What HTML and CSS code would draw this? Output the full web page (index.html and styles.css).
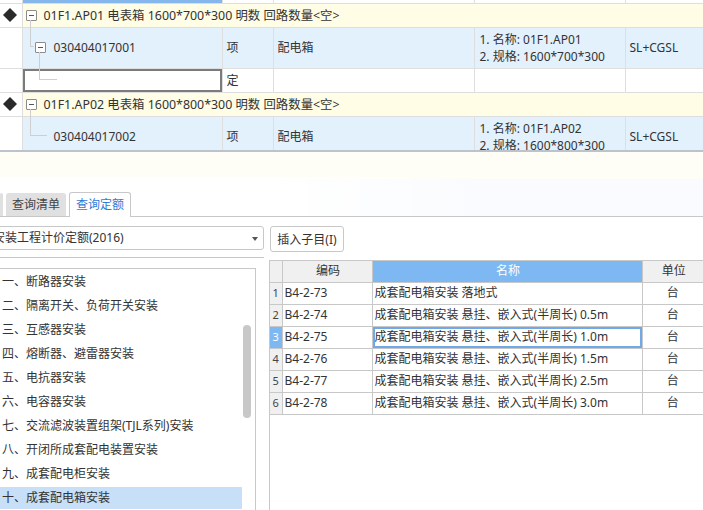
FILE: index.html
```html
<!DOCTYPE html>
<html lang="zh">
<head>
<meta charset="utf-8">
<link rel="stylesheet" href="styles.css">
</head>
<body>
<div class="top">
  <table class="grid">
    <colgroup>
      <col class="c0"><col class="c1"><col class="c2"><col class="c3"><col class="c4"><col class="c5">
    </colgroup>
    <tr class="r-cut"><td class="gut"></td><td class="cut-sel"></td><td></td><td></td><td></td><td></td></tr>
    <tr class="r-hdr">
      <td class="gut"><svg class="diamond" width="14" height="14" viewBox="0 0 14 14"><polygon points="7,0 14,7 7,14 0,7" fill="#2a2a2a"/></svg></td>
      <td class="hdr" colspan="5"><span class="minus"></span>01F1.AP01 电表箱 1600*700*300 明数 回路数量&lt;空&gt;</td>
    </tr>
    <tr class="r-item">
      <td class="gut"></td>
      <td class="code lvl2"><span class="minus"></span>030404017001</td>
      <td>项</td>
      <td>配电箱</td>
      <td class="feat">1. 名称: 01F1.AP01<br>2. 规格: 1600*700*300</td>
      <td>SL+CGSL</td>
    </tr>
    <tr class="r-sub">
      <td class="gut"></td>
      <td class="sel"></td>
      <td>定</td>
      <td></td><td></td><td></td>
    </tr>
    <tr class="r-hdr">
      <td class="gut"><svg class="diamond" width="14" height="14" viewBox="0 0 14 14"><polygon points="7,0 14,7 7,14 0,7" fill="#2a2a2a"/></svg></td>
      <td class="hdr" colspan="5"><span class="minus"></span>01F1.AP02 电表箱 1600*800*300 明数 回路数量&lt;空&gt;</td>
    </tr>
    <tr class="r-item">
      <td class="gut"></td>
      <td class="code lvl2b">030404017002</td>
      <td>项</td>
      <td>配电箱</td>
      <td class="feat">1. 名称: 01F1.AP02<br>2. 规格: 1600*800*300</td>
      <td>SL+CGSL</td>
    </tr>
  </table>
  <span class="elbow e1"></span>
  <span class="elbow e2"></span>
  <span class="elbow e3"></span>
</div>
<div class="fade">
  <div class="tabs">
    <div class="tab stub"></div>
    <div class="tab">查询清单</div>
    <div class="tab active">查询定额</div>
  </div>
</div>
<div class="toolbar">
  <div class="select"><span class="select-text">安装工程计价定额(2016)</span><span class="caret"></span></div>
  <button class="btn">插入子目(I)</button>
</div>
<div class="content">
  <div class="left">
    <ul class="list">
      <li>一、断路器安装</li>
      <li>二、隔离开关、负荷开关安装</li>
      <li>三、互感器安装</li>
      <li>四、熔断器、避雷器安装</li>
      <li>五、电抗器安装</li>
      <li>六、电容器安装</li>
      <li>七、交流滤波装置组架(TJL系列)安装</li>
      <li>八、开闭所成套配电装置安装</li>
      <li>九、成套配电柜安装</li>
      <li class="on">十、成套配电箱安装</li>
    </ul>
    <span class="thumb"></span>
  </div>
  <div class="right">
    <table class="quota">
      <colgroup><col class="q0"><col class="q1"><col class="q2"><col class="q3"></colgroup>
      <tr class="qh"><th class="rn"></th><th>编码</th><th class="hl">名称</th><th>单位</th></tr>
      <tr><td class="rn">1</td><td>B4-2-73</td><td>成套配电箱安装 落地式</td><td class="u">台</td></tr>
      <tr><td class="rn">2</td><td>B4-2-74</td><td>成套配电箱安装 悬挂、嵌入式(半周长) 0.5m</td><td class="u">台</td></tr>
      <tr><td class="rn cur">3</td><td>B4-2-75</td><td class="focus">成套配电箱安装 悬挂、嵌入式(半周长) 1.0m</td><td class="u">台</td></tr>
      <tr><td class="rn">4</td><td>B4-2-76</td><td>成套配电箱安装 悬挂、嵌入式(半周长) 1.5m</td><td class="u">台</td></tr>
      <tr><td class="rn">5</td><td>B4-2-77</td><td>成套配电箱安装 悬挂、嵌入式(半周长) 2.5m</td><td class="u">台</td></tr>
      <tr><td class="rn">6</td><td>B4-2-78</td><td>成套配电箱安装 悬挂、嵌入式(半周长) 3.0m</td><td class="u">台</td></tr>
    </table>
  </div>
</div>
</body>
</html>
```
FILE: styles.css
```css
* { box-sizing: border-box; }
html, body { margin: 0; padding: 0; background: #fff; }
body {
  font-family: "Noto Sans", "Noto Sans CJK SC", sans-serif;
  font-size: 12px;
  color: #333;
  width: 703px;
  height: 510px;
  overflow: hidden;
}

/* ---------- top tree grid ---------- */
.top {
  position: relative;
  height: 152px;
  overflow: hidden;
  border-bottom: 2px solid #bcc3cd;
}
.grid {
  border-collapse: collapse;
  table-layout: fixed;
  width: 703px;
}
.c0 { width: 22px; }
.c1 { width: 200px; }
.c2 { width: 51px; }
.c3 { width: 201px; }
.c4 { width: 151px; }
.c5 { width: 78px; }
.grid td {
  border: 1px solid #dedede;
  padding: 0 0 0 4px;
  line-height: 17px;
  white-space: nowrap;
  overflow: hidden;
  vertical-align: middle;
}
.grid tr:first-child td { border-top: none; }
.grid td:first-child { border-left: none; }
.grid td:last-child { border-right: none; }
.r-cut td { height: 3px; padding: 0; }
.grid .cut-sel { background: #86b7ec; }
.r-hdr td { height: 24px; }
.r-item td { height: 41px; background: #e3f1fd; }
.r-sub td { height: 24px; }
.grid td.gut { background: #fff; padding: 0; text-align: center; }
.diamond { display: block; margin: 0 auto 0 3px; }
.grid td.hdr {
  background: #fffde6;
  padding-left: 3px;
  font-size: 12.4px;
}
.minus {
  display: inline-block;
  position: relative;
  width: 11px;
  height: 11px;
  border: 1px solid #8c8c8c;
  border-radius: 1px;
  background: #fff;
  vertical-align: -1px;
  margin-right: 7px;
}
.minus::after {
  content: "";
  position: absolute;
  left: 2px;
  top: 4px;
  width: 5px;
  height: 1px;
  background: #555;
}
.grid td.lvl2 { padding-left: 12px; }
.grid td.lvl2 .minus { margin-right: 8px; }
.grid td.lvl2b { padding-left: 31px; }
.grid td.feat { padding-left: 5px; }
.grid td.sel { box-shadow: inset 0 0 0 2px #7b7b7b; background: #fff; }
.elbow {
  position: absolute;
  border-left: 1px solid #cfcfcf;
  border-bottom: 1px solid #cfcfcf;
}
.e1 { left: 30px; top: 20px; width: 4px; height: 27px; }
.e2 { left: 39px; top: 52px; width: 18px; height: 28px; }
.e3 { left: 30px; top: 109px; width: 17px; height: 27px; }

/* ---------- faded band + tabs ---------- */
.fade {
  height: 65px;
  display: flex;
  align-items: flex-end;
  background: linear-gradient(to bottom, #fefdf6 0, #fefdf6 27px, #f9fbfe 27px, #f9fbfe 100%);
  border-bottom: 1px solid #c8c8c8;
}
.tabs {
  display: flex;
  align-items: flex-end;
  gap: 3px;
  width: 100%;
  height: 39px;
  background: linear-gradient(to right, #fff 0, #fff 40%, rgba(255,255,255,0) 70%);
}
.tab {
  height: 23px;
  padding: 0 6px;
  line-height: 23px;
  background: #e0e0e0;
  color: #444;
  border-radius: 3px 3px 0 0;
  font-size: 12px;
}
.tab.stub { width: 3px; padding: 0; margin-left: 0; }
.tab.active {
  height: 25px;
  line-height: 24px;
  background: #fff;
  color: #2f7bd6;
  border: 1px solid #c8c8c8;
  border-bottom: none;
  margin-left: 0;
  padding: 0 6px;
  margin-bottom: -1px;
}

/* ---------- toolbar ---------- */
.toolbar {
  height: 40px;
  display: flex;
  align-items: flex-start;
  gap: 6px;
  padding-top: 9px;
}
.select {
  position: relative;
  width: 284px;
  height: 24px;
  margin-left: -20px;
  border: 1px solid #c8c8c8;
  border-radius: 3px;
  padding-left: 12px;
  line-height: 22px;
  font-size: 12px;
}
.caret {
  position: absolute;
  right: 5px;
  top: 10px;
  border-left: 3px solid transparent;
  border-right: 3px solid transparent;
  border-top: 4px solid #555;
}
.btn {
  height: 26px;
  width: 74px;
  padding: 0;
  margin: 0;
  font: inherit;
  font-size: 12px;
  color: #333;
  background: #fff;
  border: 1px solid #c8c8c8;
  border-radius: 3px;
}

/* ---------- content ---------- */
.content {
  display: flex;
  gap: 5px;
  height: 253px;
}
.left {
  position: relative;
  width: 265px;
  border-top: 1px solid #c8c8c8;
  padding-top: 10px;
}
.list {
  list-style: none;
  margin: 0 0 0 -2px;
  padding: 1px 0 0;
  width: 258px;
  height: 260px;
  border: 1px solid #c8c8c8;
}
.list li {
  height: 24px;
  line-height: 24px;
  padding-left: 3px;
  white-space: nowrap;
  width: 243px;
}
.list li.on { background: #c8dff8; height: 22px; line-height: 22px; margin-top: 1px; }
.thumb {
  position: absolute;
  left: 243px;
  top: 67px;
  width: 8px;
  height: 93px;
  border-radius: 4px;
  background: #c8c8c8;
}
.right {
  flex: 1;
  margin-top: 3px;
  border-left: 1px solid #c8c8c8;
  border-top: 1px solid #c8c8c8;
}
.quota {
  border-collapse: collapse;
  table-layout: fixed;
  width: 433px;
}
.q0 { width: 12px; }
.q1 { width: 90px; }
.q2 { width: 270px; }
.q3 { width: 61px; }
.quota th, .quota td {
  border: 1px solid #c8c8c8;
  height: 22px;
  padding: 0 0 0 2px;
  font-weight: normal;
  text-align: left;
  white-space: nowrap;
  overflow: hidden;
  line-height: 20px;
}
.quota tr:first-child th { border-top: none; height: 21px; background: #f0f0f0; text-align: center; }
.quota th:first-child, .quota td:first-child { border-left: none; }
.quota th:last-child, .quota td:last-child { border-right: none; }
.quota .rn { background: #f0f0f0; padding: 0; text-align: center; font-size: 11px; color: #444; }
.quota .rn.cur { background: #7db8f2; color: #fff; }
.quota tr.qh th.hl { background: #7db8f2; color: #fff; }
.quota td.u { text-align: center; padding: 0; }
.quota td.focus { box-shadow: inset 0 0 0 2px #6fa9e8; }
```
